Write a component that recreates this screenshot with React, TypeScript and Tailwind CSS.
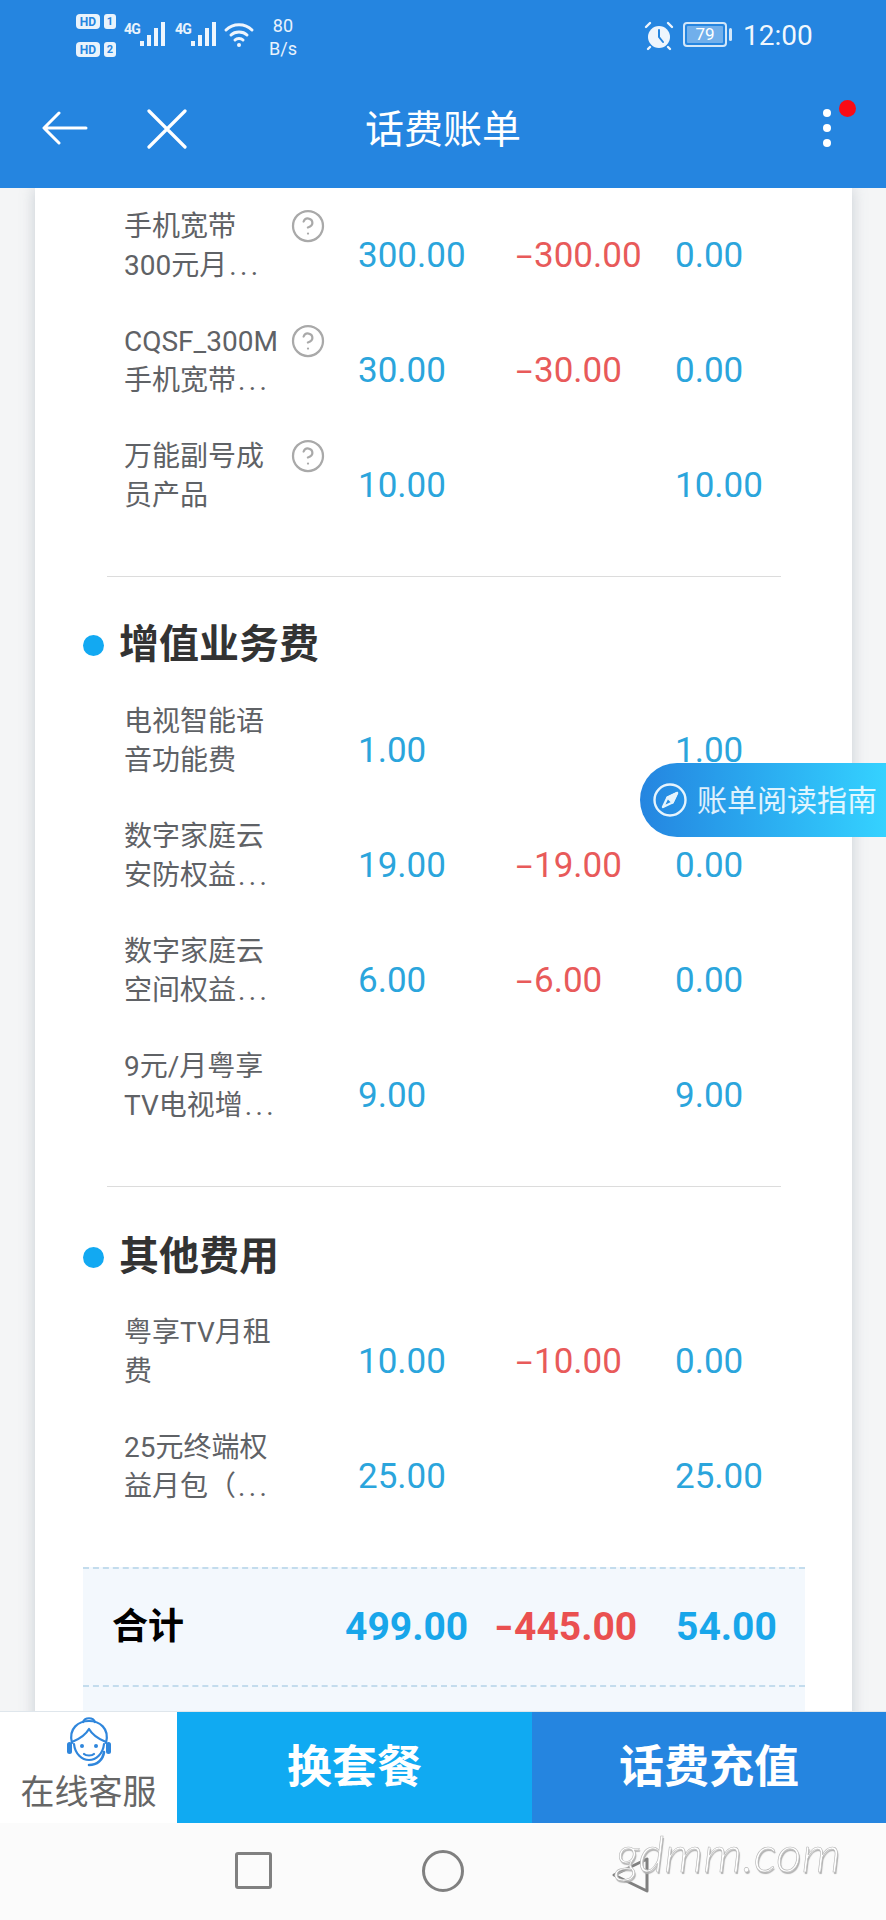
import React from "react";
import { CircleHelp } from "lucide-react";

interface Fee {
  name: string[];
  amount: string;
  discount?: string;
  total: string;
  help?: boolean;
}

const packageFees: Fee[] = [
  { name: ["手机宽带", "300元月"], amount: "300.00", discount: "300.00", total: "0.00", help: true },
  { name: ["CQSF_300M", "手机宽带"], amount: "30.00", discount: "30.00", total: "0.00", help: true },
  { name: ["万能副号成", "员产品"], amount: "10.00", total: "10.00", help: true },
];

const valueAddedFees: Fee[] = [
  { name: ["电视智能语", "音功能费"], amount: "1.00", total: "1.00" },
  { name: ["数字家庭云", "安防权益"], amount: "19.00", discount: "19.00", total: "0.00" },
  { name: ["数字家庭云", "空间权益"], amount: "6.00", discount: "6.00", total: "0.00" },
  { name: ["9元/月粤享", "TV电视增"], amount: "9.00", total: "9.00" },
];

const otherFees: Fee[] = [
  { name: ["粤享TV月租", "费"], amount: "10.00", discount: "10.00", total: "0.00" },
  { name: ["25元终端权", "益月包（"], amount: "25.00", total: "25.00" },
];

const truncated = new Set(["300元月", "手机宽带", "安防权益", "空间权益", "TV电视增", "益月包（"]);

function FeeList({ fees }: { fees: Fee[] }) {
  return (
    <div>
      {fees.map((fee) => (
        <div key={fee.name.join("")} className="grid h-[115px] grid-cols-[234px_158px_1fr] pl-[89px]">
          <div className="flex pt-[10px]">
            <div className="w-[169px] text-[28px] leading-[39px] text-[#5f6266]">
              {fee.name.map((line, i) => (
                <div key={i} className="whitespace-nowrap">
                  {line}
                  {i === 1 && truncated.has(line) && <span className="ml-[2px] tracking-[0.12em]">...</span>}
                </div>
              ))}
            </div>
            {fee.help && <CircleHelp size={36} strokeWidth={1.5} className="mt-[1px] -ml-[3px] shrink-0 text-[#a9a9a9]" />}
          </div>
          <div className="pt-[39px] text-[35px] leading-[40px] text-[#2ba5dc]">{fee.amount}</div>
          <div className="flex pt-[39px] text-[35px] leading-[40px]">
            <span className="w-[159px] shrink-0 text-[#e85a5a]">
              {fee.discount && <span className="inline-block w-[18px] origin-left scale-x-[1.7]">-</span>}
              {fee.discount}
            </span>
            <span className="text-[#2ba5dc]">{fee.total}</span>
          </div>
        </div>
      ))}
    </div>
  );
}

function SectionTitle({ title }: { title: string }) {
  return (
    <div className="flex h-[50px] items-center pl-[48px]">
      <span className="mr-[15px] h-[21px] w-[21px] rounded-full bg-[#12a9f2]" />
      <span className="text-[40px] font-bold text-[#333333]">{title}</span>
    </div>
  );
}

function SimBadge({ n }: { n: number }) {
  return (
    <div className="flex items-center gap-[4px]">
      <span className="flex h-[15px] w-[24px] items-center justify-center rounded-[4px] bg-white/90 text-[12px] leading-none font-bold text-[#2585e0]">HD</span>
      <span className="flex h-[15px] w-[12px] items-center justify-center rounded-[3px] bg-white/90 text-[11px] leading-none font-bold text-[#2585e0]">{n}</span>
    </div>
  );
}

function Signal() {
  return (
    <div className="flex w-[51px] items-start">
      <span className="mt-[1px] w-[15px] text-[14px] leading-none font-bold tracking-[-0.06em] text-white/90">4G</span>
      <svg width="27" height="26" viewBox="0 0 27 26" fill="#eef5fd">
        <rect x="1" y="20" width="4" height="5" />
        <rect x="8" y="14" width="4" height="11" />
        <rect x="15" y="7" width="4" height="18" />
        <rect x="22" y="1" width="4" height="24" />
      </svg>
    </div>
  );
}

function Agent() {
  return (
    <svg width="48" height="52" viewBox="0 0 48 52" fill="none" stroke="#2f86dc" strokeWidth="2.2" strokeLinecap="round" strokeLinejoin="round">
      <path d="M18 6 C20 1 28 1 30 6" />
      <path d="M7 27 C3 12 14 5 24 5 C34 5 45 12 41 27" />
      <path d="M7 26 C12 24 20 20 24 13 C28 20 36 24 41 26" />
      <path d="M9 28 C10 38 17 44 24 44 C31 44 38 38 39 28" />
      <path d="M19 38 C21 40 27 40 29 38" />
      <path d="M39 36 C38 44 32 49 24 49" strokeWidth="2.6" />
      <rect x="2" y="26" width="5" height="12" rx="2.5" fill="#2f86dc" stroke="none" />
      <rect x="41" y="26" width="5" height="12" rx="2.5" fill="#2f86dc" stroke="none" />
      <circle cx="17" cy="30" r="2" fill="#2f86dc" stroke="none" />
      <circle cx="31" cy="30" r="2" fill="#2f86dc" stroke="none" />
    </svg>
  );
}

export default function App() {
  const font = "font-['Roboto','Noto_Sans_CJK_SC',sans-serif]";
  return (
    <div className={`relative flex h-[1920px] w-[886px] flex-col overflow-hidden bg-[#f4f5f6] ${font}`}>
      {/* status + title bar */}
      <header className="z-10 h-[188px] shrink-0 bg-[#2585e0] text-white">
        <div className="flex h-[70px] items-start pt-[14px] pl-[76px]">
          <div className="flex w-[48px] flex-col gap-[13px]">
            <SimBadge n={1} />
            <SimBadge n={2} />
          </div>
          <div className="flex pt-[7px]">
            <Signal />
            <Signal />
          </div>
          <svg width="32" height="28" viewBox="0 0 32 28" fill="none" stroke="#eef5fd" strokeWidth="3" strokeLinecap="round" className="mt-[7px] -ml-[3px]">
            <path d="M3 9 C10 2 22 2 29 9" />
            <path d="M8 14 C12 10 20 10 24 14" />
            <path d="M12 19 C14 17 18 17 20 19" />
            <circle cx="16" cy="24" r="2" fill="#eef5fd" stroke="none" />
          </svg>
          <div className="ml-[14px] flex flex-col items-center text-[18px] leading-[23px] text-white/90">
            <span>80</span>
            <span>B/s</span>
          </div>
          <svg width="30" height="30" viewBox="0 0 30 30" className="mt-[7px] ml-[347px]" fill="none" stroke="#eef5fd" strokeWidth="2.4" strokeLinecap="round">
            <circle cx="15" cy="16" r="11" fill="#eef5fd" stroke="none" />
            <path d="M15 9 V16 L19 21" stroke="#2585e0" strokeWidth="2" />
            <path d="M2 6 L6 2 M28 6 L24 2 M6 26 L4 28 M24 26 L26 28" />
          </svg>
          <div className="mt-[8px] ml-[9px] flex items-center">
            <div className="flex h-[25px] w-[44px] items-center justify-center rounded-[4px] border-2 border-white/80 p-[2px]">
              <div className="flex h-full w-full items-center justify-center rounded-[1px] bg-white/35 text-[17px] leading-none">79</div>
            </div>
            <div className="ml-[2px] h-[13px] w-[3px] rounded-full bg-white/80" />
          </div>
          <span className="mt-[3px] ml-[11px] text-[28px] leading-[38px] text-white/95">12:00</span>
        </div>
        <div className="relative flex h-[118px] items-start justify-center pt-[35px]">
          <svg width="46" height="34" viewBox="0 0 46 34" fill="none" stroke="white" strokeWidth="3" strokeLinecap="round" strokeLinejoin="round" className="absolute top-[41px] left-[42px]">
            <path d="M44 17 H3 M17 2 L2 17 L17 32" />
          </svg>
          <svg width="40" height="40" viewBox="0 0 40 40" fill="none" stroke="white" strokeWidth="3.2" strokeLinecap="round" className="absolute top-[39px] left-[147px]">
            <path d="M2 2 L38 38 M38 2 L2 38" />
          </svg>
          <span className="text-[39px] leading-[50px]">话费账单</span>
          <div className="absolute top-[39px] left-[823px] flex flex-col gap-[7px]">
            <span className="h-[8px] w-[8px] rounded-full bg-white" />
            <span className="h-[8px] w-[8px] rounded-full bg-white" />
            <span className="h-[8px] w-[8px] rounded-full bg-white" />
          </div>
          <span className="absolute top-[30px] left-[839px] h-[17px] w-[17px] rounded-full bg-[#fa0a14]" />
        </div>
      </header>

      {/* bill card */}
      <main className="min-h-0 flex-1 overflow-hidden pr-[34px] pl-[35px]">
        <div className="h-[1600px] bg-white pt-[9px] shadow-[0_0_14px_rgba(120,135,150,0.35)]">
          <FeeList fees={packageFees} />
          <div className="mt-[34px] mr-[71px] ml-[72px] h-px bg-[#dcdcdc]" />
          <div className="mt-[43px]">
            <SectionTitle title="增值业务费" />
          </div>
          <div className="mt-[22px]">
            <FeeList fees={valueAddedFees} />
          </div>
          <div className="mt-[34px] mr-[71px] ml-[72px] h-px bg-[#dcdcdc]" />
          <div className="mt-[45px]">
            <SectionTitle title="其他费用" />
          </div>
          <div className="mt-[21px]">
            <FeeList fees={otherFees} />
          </div>
          <div className="mt-[34px] mr-[47px] ml-[48px] h-[170px] bg-[#f3f8fd]">
            <div className="flex h-[120px] items-center border-y-2 border-dashed border-y-[#c3dced] pl-[29px]">
              <span className="w-[233px] text-[36px] font-bold text-black">合计</span>
              <span className="w-[149px] text-[39px] font-bold text-[#18a6ea]">499.00</span>
              <span className="w-[182px] text-[39px] font-bold text-[#ea5050]">
                <span className="inline-block w-[20px] origin-left scale-x-[1.3]">-</span>445.00
              </span>
              <span className="text-[39px] font-bold text-[#18a6ea]">54.00</span>
            </div>
          </div>
        </div>
      </main>

      {/* floating guide */}
      <div className="absolute top-[763px] right-0 flex h-[74px] w-[246px] items-center rounded-l-[37px] bg-gradient-to-r from-[#2585e0] to-[#35d2ff] pl-[13px]">
        <svg width="34" height="34" viewBox="0 0 34 34" fill="none" stroke="#e6f4fd" strokeWidth="2.4">
          <circle cx="17" cy="17" r="15.5" />
          <path d="M24 10 L19.5 19.5 L10 24 L14.5 14.5 Z" strokeLinejoin="round" />
          <path d="M24 10 L19.5 19.5 L14.5 14.5 Z" fill="#e6f4fd" strokeLinejoin="round" />
        </svg>
        <span className="ml-[10px] text-[30px] whitespace-nowrap text-white/85">账单阅读指南</span>
      </div>

      {/* actions */}
      <div className="z-10 flex h-[112px] shrink-0 border-t border-[#dfe6ec]">
        <div className="flex w-[177px] flex-col items-center bg-white pt-[4px]">
          <Agent />
          <span className="mt-[2px] text-[34px] leading-[44px] text-[#666666]">在线客服</span>
        </div>
        <div className="flex w-[355px] items-center justify-center bg-[#10aaf2] text-[45px] font-bold text-white">换套餐</div>
        <div className="flex flex-1 items-center justify-center bg-[#2585e0] text-[45px] font-bold text-white">话费充值</div>
      </div>

      {/* system nav */}
      <nav className="relative flex h-[97px] shrink-0 items-center bg-[#fbfbfb] pb-[2px] pl-[235px]">
        <div className="h-[37px] w-[37px] rounded-[3px] border-[3px] border-[#808080]" />
        <div className="ml-[150px] h-[42px] w-[42px] rounded-full border-[3px] border-[#808080]" />
        <svg width="40" height="40" viewBox="0 0 40 40" fill="none" stroke="#808080" strokeWidth="3" strokeLinejoin="round" className="mt-[8px] ml-[147px]">
          <path d="M3 20 L36 4 V36 Z" />
        </svg>
        <span className="absolute top-[0px] left-[616px] font-['Lato',sans-serif] text-[50px] leading-[60px] font-light text-white italic [-webkit-text-stroke:0.6px_#b5b5b5] [text-shadow:1px_2px_1px_#b0b0b0]">
          gdmm.com
        </span>
      </nav>
    </div>
  );
}
